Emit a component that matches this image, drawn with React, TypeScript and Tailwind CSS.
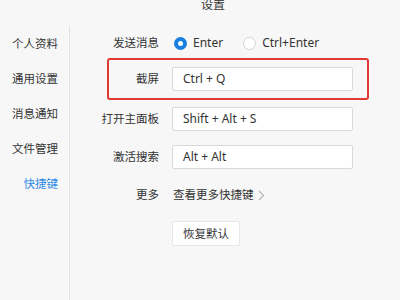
const font = { fontFamily: '"Noto Sans", "Noto Sans CJK SC", sans-serif' };

const navItems = ['个人资料', '通用设置', '消息通知', '文件管理', '快捷键'];

const Radio: React.FC<{ checked?: boolean; label: string }> = ({ checked, label }) => (
  <div className="flex items-center">
    {checked ? (
      <span className="w-[13px] h-[13px] rounded-full border-[4px] border-[#1a7fe0] bg-white box-border" />
    ) : (
      <span className="w-[13px] h-[13px] rounded-full border border-[#d4d4d4] bg-white box-border" />
    )}
    <span className="ml-[6px] text-[12px] text-[#333]">{label}</span>
  </div>
);

const KeyInput: React.FC<{ value: string }> = ({ value }) => (
  <div className="w-[181px] h-[24px] bg-white border border-[#d9d9d9] rounded-[2px] pl-[10px] flex items-center text-[12px] text-[#333]">
    {value}
  </div>
);

export default function App() {
  return (
    <div className="w-[400px] h-[300px] bg-[#f7f7f7] flex flex-col overflow-hidden" style={font}>
      <div className="h-[26px] shrink-0">
        <div className="-mt-[3px] pl-[201px] text-[12px] leading-[16px] text-[#333]">设置</div>
      </div>
      <div className="flex flex-1">
        <div className="w-[70px] border-r border-[#e2e2e2] flex flex-col items-end pr-[11px] pt-[0px]">
          {navItems.map((item, i) => (
            <div
              key={item}
              className={`h-[35px] leading-[35px] text-[11.5px] ${i === 4 ? 'text-[#2f8ae5]' : 'text-[#333]'}`}
            >
              {item}
            </div>
          ))}
        </div>
        <div className="flex-1 pl-[19px] text-[11.5px] text-[#333]">
          <div className="flex items-center h-[24px] mt-[5px]">
            <div className="w-[70px] text-right whitespace-nowrap">发送消息</div>
            <div className="ml-[15px] flex items-center gap-[20px]">
              <Radio checked label="Enter" />
              <Radio label="Ctrl+Enter" />
            </div>
          </div>
          <div className="ml-[18px] mt-[3px] w-[262px] h-[42px] border-2 border-[#e23a33] rounded-[3px] flex items-center">
            <div className="w-[50px] text-right whitespace-nowrap">截屏</div>
            <div className="ml-[13px]">
              <KeyInput value="Ctrl + Q" />
            </div>
          </div>
          <div className="flex items-center h-[24px] mt-[7px]">
            <div className="w-[70px] text-right whitespace-nowrap">打开主面板</div>
            <div className="ml-[13px]">
              <KeyInput value="Shift + Alt + S" />
            </div>
          </div>
          <div className="flex items-center h-[24px] mt-[14px]">
            <div className="w-[70px] text-right whitespace-nowrap">激活搜索</div>
            <div className="ml-[13px]">
              <KeyInput value="Alt + Alt" />
            </div>
          </div>
          <div className="flex items-center h-[24px] mt-[14px]">
            <div className="w-[70px] text-right whitespace-nowrap">更多</div>
            <div className="ml-[14px] flex items-center">
              <span>查看更多快捷键</span>
              <svg width="7" height="11" viewBox="0 0 7 11" className="ml-[4px]">
                <path d="M1 1l4.5 4.5L1 10" fill="none" stroke="#b5b5b5" strokeWidth="1.2" />
              </svg>
            </div>
          </div>
          <div className="mt-[14px] ml-[83px]">
            <button className="w-[68px] h-[25px] bg-white border border-[#e6e6e6] rounded-[2px] text-[11.5px] text-[#333]">
              恢复默认
            </button>
          </div>
        </div>
      </div>
    </div>
  );
}
